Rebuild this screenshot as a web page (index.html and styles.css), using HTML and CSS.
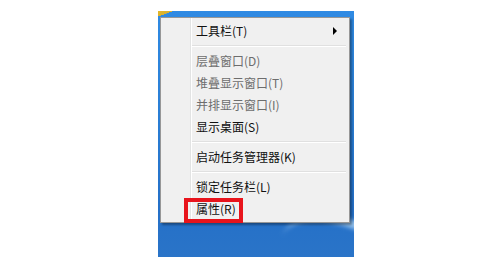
FILE: index.html
```html
<!DOCTYPE html>
<html>
<head>
<meta charset="utf-8">
<link rel="stylesheet" href="styles.css">
</head>
<body>
<div class="desktop">
  <div class="corner"></div>
  <div class="swoosh"></div>
  <div class="menu">
    <div class="item"><span class="label">工具栏(T)</span><span class="arrow"></span></div>
    <div class="sep"></div>
    <div class="item disabled"><span class="label">层叠窗口(D)</span></div>
    <div class="item disabled"><span class="label">堆叠显示窗口(T)</span></div>
    <div class="item disabled"><span class="label">并排显示窗口(I)</span></div>
    <div class="item"><span class="label">显示桌面(S)</span></div>
    <div class="sep"></div>
    <div class="item"><span class="label">启动任务管理器(K)</span></div>
    <div class="sep"></div>
    <div class="item"><span class="label">锁定任务栏(L)</span></div>
    <div class="item"><span class="label">属性(R)</span></div>
    <div class="highlight"></div>
  </div>
</div>
</body>
</html>
```
FILE: styles.css
```css
html, body {
  margin: 0;
  padding: 0;
  background: #ffffff;
}
body {
  font-family: "Noto Sans CJK SC", "Liberation Sans", sans-serif;
  font-size: 12px;
}
.desktop {
  position: relative;
  margin: 11px 0 0 158px;
  width: 196px;
  height: 246px;
  padding: 6px 0 0 2px;
  box-sizing: border-box;
  background: linear-gradient(180deg, #2f8ae3 0%, #2a7fd6 40%, #2470c8 80%, #2a74c8 100%);
  overflow: hidden;
}
.corner {
  position: absolute;
  left: 0;
  top: 0;
  width: 14px;
  height: 6px;
  background: linear-gradient(160deg, #e5b828 0%, #d8b030 50%, transparent 51%);
}
.swoosh {
  position: absolute;
  left: 120px;
  top: 208px;
  width: 130px;
  height: 70px;
  border-radius: 50%;
  border-top: 8px solid rgba(185, 220, 248, 0.75);
  transform: rotate(20deg);
  filter: blur(2px);
}
.menu {
  position: relative;
  width: 190px;
  height: 206px;
  box-sizing: border-box;
  background: #f0f0f0;
  border: 1px solid #979797;
  box-shadow: 2px 2px 2px rgba(0, 0, 0, 0.35);
  padding: 2px 2px 0 2px;
  display: flex;
  flex-direction: column;
  background-image: linear-gradient(90deg, transparent 29px, #e2e3e3 29px, #e2e3e3 30px, #ffffff 30px, #ffffff 31px, transparent 31px);
}
.item {
  height: 22px;
  display: flex;
  align-items: center;
  padding-left: 33px;
  padding-right: 10px;
  color: #111111;
  line-height: 22px;
}
.item.disabled {
  color: #6d6d6d;
}
.label {
  flex: 1;
}
.arrow {
  width: 0;
  height: 0;
  border-top: 4px solid transparent;
  border-bottom: 4px solid transparent;
  border-left: 4px solid #000;
}
.sep {
  height: 8px;
  margin-left: 29px;
  margin-right: 1px;
  background: linear-gradient(180deg, transparent 3px, #e0e0e0 3px, #e0e0e0 4px, #ffffff 4px, #ffffff 5px, transparent 5px);
}
.highlight {
  position: absolute;
  left: 23px;
  top: 180px;
  width: 59px;
  height: 25px;
  box-sizing: border-box;
  border: 4px solid #e8141c;
}
```
